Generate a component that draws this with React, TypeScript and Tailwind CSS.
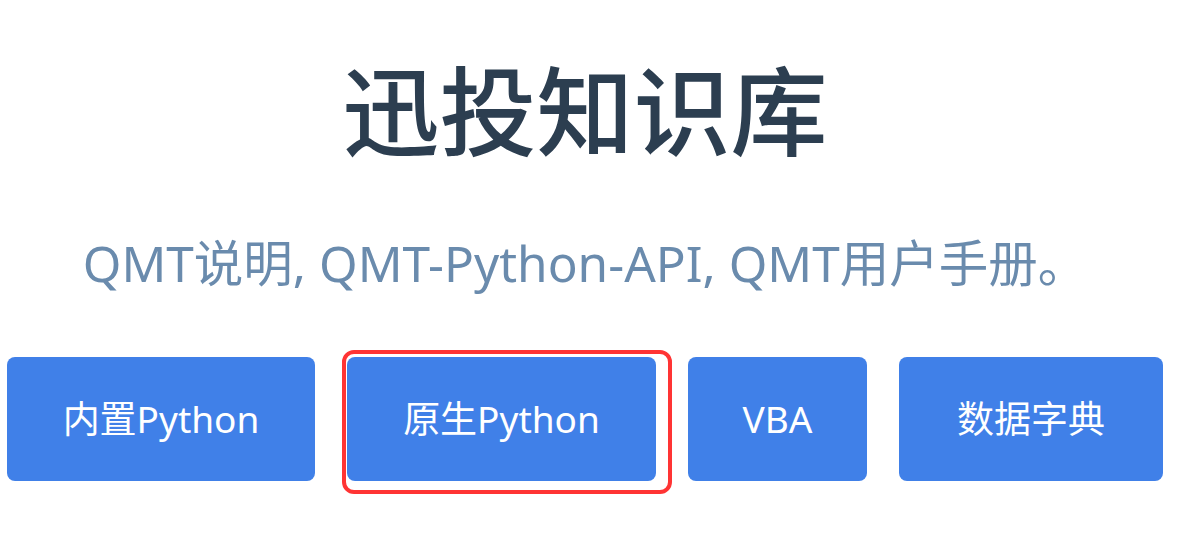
import React from "react";

const font = {
  fontFamily: '"Noto Sans", "Noto Sans CJK SC", sans-serif',
};

function Btn({ label, w }: { label: string; w: string }) {
  return (
    <div
      className={`${w} h-[124px] rounded-[8px] bg-[#4080e8] text-white text-[37px] leading-none flex items-center justify-center`}
    >
      {label}
    </div>
  );
}

export default function App() {
  return (
    <div className="w-[1202px] h-[556px] bg-white overflow-hidden" style={font}>
      <div className="w-[1170px] flex flex-col items-center pt-[62px]">
        <h1 className="text-[97px] leading-none font-medium text-[#2c3e50] tracking-normal">
          迅投知识库
        </h1>
        <p className="mt-[80px] text-[49.5px] leading-none text-[#6a8bad]">
          QMT说明, QMT-Python-API, QMT用户手册。
        </p>
        <div className="mt-[68px] flex gap-[32px] justify-center">
          <Btn label="内置Python" w="w-[308px]" />
          <div className="relative">
            <Btn label="原生Python" w="w-[309px]" />
            <span className="absolute left-[-5px] top-[-7px] right-[-16px] bottom-[-13px] border-[4px] border-[#ff3434] rounded-[12px]" />
          </div>
          <Btn label="VBA" w="w-[179px]" />
          <Btn label="数据字典" w="w-[264px]" />
        </div>
      </div>
    </div>
  );
}
